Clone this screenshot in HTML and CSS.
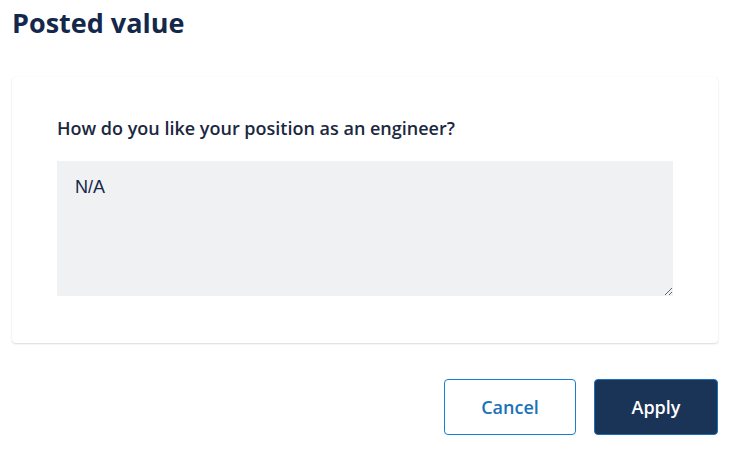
FILE: index.html
```html
<!DOCTYPE html>
<html lang="en">
<head>
<meta charset="utf-8">
<title>Posted value</title>
<link rel="stylesheet" href="styles.css">
</head>
<body>
<div class="page">
  <h1 class="title">Posted value</h1>
  <section class="card">
    <label class="question" for="answer">How do you like your position as an engineer?</label>
    <textarea id="answer" class="answer" readonly>N/A</textarea>
  </section>
  <div class="actions">
    <button class="btn btn-cancel" type="button">Cancel</button>
    <button class="btn btn-apply" type="button">Apply</button>
  </div>
</div>
</body>
</html>
```
FILE: styles.css
```css
html, body {
  margin: 0;
  padding: 0;
  background: #ffffff;
}
body {
  font-family: "Open Sans", "Noto Sans", sans-serif;
  color: #14284b;
}
.page {
  padding: 5px 15px 0 12px;
}
.title {
  margin: 0;
  font-size: 27px;
  line-height: 36px;
  font-weight: 700;
  color: #14284b;
}
.card {
  margin-top: 36px;
  background: #fff;
  border-radius: 4px;
  box-shadow: 0 1px 2px rgba(0, 0, 0, 0.14), 0 0 1px rgba(0, 0, 0, 0.08);
  padding: 39px 45px 47px 45px;
}
.question {
  display: block;
  font-size: 18px;
  line-height: 24px;
  font-weight: 600;
  color: #1b2840;
}
.answer {
  display: block;
  box-sizing: border-box;
  width: 616px;
  height: 135px;
  margin-top: 21px;
  border: none;
  border-radius: 0;
  background: #f0f1f3;
  padding: 16px 18px;
  font-family: "Liberation Sans", Arial, sans-serif;
  font-size: 18px;
  color: #14284b;
  outline: none;
  resize: vertical;
}
.actions {
  display: flex;
  justify-content: flex-end;
  gap: 18px;
  margin-top: 36px;
}
.btn {
  box-sizing: border-box;
  height: 56px;
  border-radius: 4px;
  font-family: "Open Sans", "Noto Sans", sans-serif;
  font-size: 18px;
  font-weight: 600;
  cursor: pointer;
  padding: 0;
}
.btn-cancel {
  width: 132px;
  background: #ffffff;
  border: 1px solid #1b7fd0;
  color: #1a72b8;
}
.btn-apply {
  width: 124px;
  background: #1a3458;
  border: 1px solid #1b6fc0;
  color: #ffffff;
}
```
